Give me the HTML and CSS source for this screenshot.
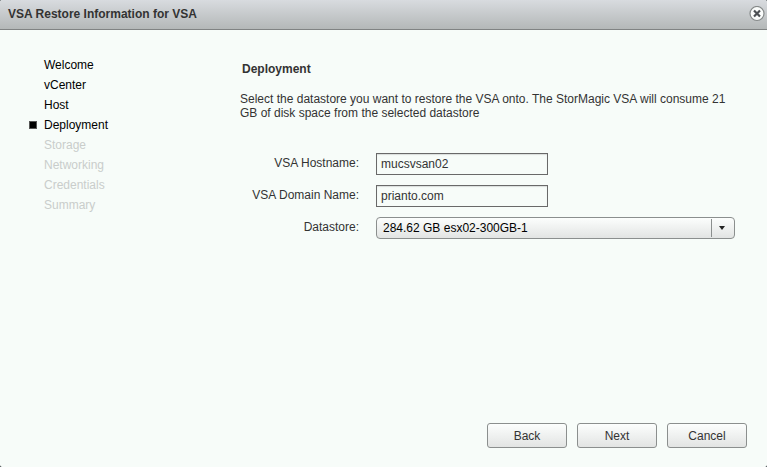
FILE: index.html
```html
<!DOCTYPE html>
<html lang="en">
<head>
    <meta charset="UTF-8">
    <meta name="viewport" content="width=device-width, initial-scale=1.0">
    <title>VSA Restore Information for VSA</title>
    <link rel="stylesheet" href="styles.css">
</head>
<body>

<form class="dialog">
    <header class="titlebar">
        <h1>VSA Restore Information for VSA</h1>
        <button type="button" class="close" aria-label="Close">
            <svg width="16" height="16" viewBox="0 0 16 16">
                <circle cx="8" cy="7.5" r="7" fill="#fafcfb" stroke="#858989" stroke-width="1.2"/>
                <path d="M5 4.5l6 6M11 4.5l-6 6" stroke="#4c5054" stroke-width="2.2"/>
            </svg>
        </button>
    </header>

    <div class="content">
        <ol class="steps">
            <li>Welcome</li>
            <li>vCenter</li>
            <li>Host</li>
            <li class="current" aria-current="step">Deployment</li>
            <li class="pending">Storage</li>
            <li class="pending">Networking</li>
            <li class="pending">Credentials</li>
            <li class="pending">Summary</li>
        </ol>

        <main class="panel">
            <h2>Deployment</h2>
            <p>Select the datastore you want to restore the VSA onto. The StorMagic VSA will consume 21 GB of disk space from the selected datastore</p>

            <div class="fields">
                <label for="hostname">VSA Hostname:</label>
                <input type="text" id="hostname" value="mucsvsan02" spellcheck="false">

                <label for="domain">VSA Domain Name:</label>
                <input type="text" id="domain" value="prianto.com" spellcheck="false">

                <label for="datastore">Datastore:</label>
                <div class="dropdown">
                    <select id="datastore">
                        <option>284.62 GB esx02-300GB-1</option>
                    </select>
                    <svg class="arrow" width="24" height="22" viewBox="0 0 24 22">
                        <path d="M0.5 2v18" stroke="#8b8f8e"/>
                        <path d="M8 9h6l-3 4z" fill="#222"/>
                    </svg>
                </div>
            </div>
        </main>
    </div>

    <footer class="buttons">
        <button type="button">Back</button>
        <button type="button">Next</button>
        <button type="button">Cancel</button>
    </footer>
</form>

</body>
</html>
```

FILE: styles.css
```css
*,
*::before {
    box-sizing: border-box;
}

body {
    margin: 0;
    background-color: #1c2026;
    font-family: "Liberation Sans", Arial, sans-serif;
    font-size: 12px;
    color: #333;
}

.dialog {
    display: flex;
    flex-direction: column;
    min-height: 100vh;
    background-color: #f7fcf9;
    border-radius: 2px;
    overflow: hidden;
}

.titlebar {
    display: flex;
    align-items: center;
    justify-content: space-between;
    height: 30px;
    padding: 0 2px 2px 8px;
    background: linear-gradient(#d8dbdf, #b4b8b8);
    border-bottom: 1px solid #808383;
}

h1, h2 {
    margin: 0;
    font-size: 12px;
    font-weight: bold;
}

.close {
    display: flex;
    padding: 0;
    border: none;
    background: none;
}

.content {
    display: flex;
    flex: 1;
    padding: 25px 32px 0 29px;
}

.steps {
    width: 211px;
    flex-shrink: 0;
    margin: 0;
    padding: 0;
    list-style: none;
    line-height: 20px;
    color: #000;
}

.steps li {
    display: flex;
    align-items: center;
    gap: 7px;
}

/* Marker square, only filled in for the current step */
.steps li::before {
    content: "";
    width: 8px;
    height: 8px;
    border: 1px solid transparent;
}

.steps .current::before {
    background-color: #000;
    border-color: #555;
}

.steps .pending {
    color: #c9cdcb;
}

.panel {
    flex: 1;
}

.panel h2 {
    padding: 7px 2px 0;
    line-height: 14px;
}

.panel p {
    margin: 16px 0 33px;
    line-height: 14px;
}

.fields {
    display: grid;
    grid-template-columns: 119px 1fr;
    gap: 10px 17px;
}

.fields label {
    text-align: right;
    line-height: 20px;
}

.fields input {
    width: 172px;
    height: 22px;
    padding: 0 4px;
    border: 1px solid #696969;
    background-color: #f7fcf9;
    box-shadow: inset 0 1px 1px #d9dddb;
    font: inherit;
    color: #333;
}

.dropdown {
    display: grid;
}

.dropdown select,
.dropdown .arrow {
    grid-area: 1 / 1;
}

.dropdown .arrow {
    justify-self: end;
    pointer-events: none;
}

.dropdown select,
.buttons button {
    border: 1px solid #8b8f8e;
    border-radius: 4px;
    background: linear-gradient(#fcfefd, #e2e4e3);
    font: inherit;
}

.dropdown select {
    appearance: none;
    height: 22px;
    padding: 0 24px 0 6px;
    color: #000;
}

.buttons {
    display: flex;
    justify-content: flex-end;
    gap: 10px;
    padding: 0 20px 19px;
}

.buttons button {
    width: 80px;
    height: 25px;
    padding: 0;
    border-radius: 3px;
    color: #333;
}
```
